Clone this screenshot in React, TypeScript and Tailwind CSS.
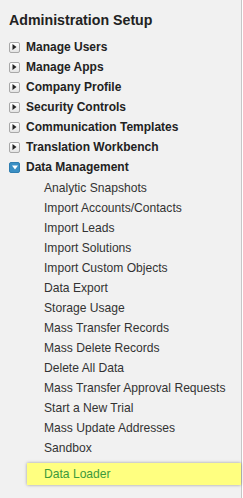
const sections = [
  "Manage Users",
  "Manage Apps",
  "Company Profile",
  "Security Controls",
  "Communication Templates",
  "Translation Workbench",
];

const dataItems = [
  "Analytic Snapshots",
  "Import Accounts/Contacts",
  "Import Leads",
  "Import Solutions",
  "Import Custom Objects",
  "Data Export",
  "Storage Usage",
  "Mass Transfer Records",
  "Mass Delete Records",
  "Delete All Data",
  "Mass Transfer Approval Requests",
  "Start a New Trial",
  "Mass Update Addresses",
  "Sandbox",
];

const Collapsed = () => (
  <span className="w-[11px] h-[11px] mr-[6px] flex items-center justify-center rounded-[2px] border border-[#a8a8a8] bg-gradient-to-b from-white to-[#e4e4e4] shrink-0">
    <svg width="5" height="6" viewBox="0 0 5 6">
      <path d="M0.5 0 L4.5 3 L0.5 6 Z" fill="#222" />
    </svg>
  </span>
);

const Expanded = () => (
  <span className="w-[11px] h-[11px] mr-[6px] flex items-center justify-center rounded-[2px] bg-[#3a8fc4] border border-[#2f7eb1] shrink-0">
    <svg width="6" height="5" viewBox="0 0 6 5">
      <path d="M0 0.5 L6 0.5 L3 4.5 Z" fill="#fff" />
    </svg>
  </span>
);

export default function App() {
  return (
    <div className="w-[243px] h-[498px] bg-white">
      <div
        className="w-[242px] h-[498px] bg-[#f1f1f1] border-r border-[#c6c6c6] text-[#222]"
        style={{ fontFamily: '"Liberation Sans", Arial, sans-serif' }}
      >
        <h2 className="pl-[9px] pt-[11px] mb-[8px] leading-[18px] text-[14.2px] font-bold text-[#222]">
          Administration Setup
        </h2>

        {sections.map((s) => (
          <div key={s} className="h-[20px] flex items-center pl-[9px]">
            <Collapsed />
            <span className="text-[12px] font-bold">{s}</span>
          </div>
        ))}

        <div className="h-[20px] flex items-center pl-[9px]">
          <Expanded />
          <span className="text-[12px] font-bold">Data Management</span>
        </div>

        <ul className="pl-[44px] mt-[1px] text-[12.1px] text-[#333]">
          {dataItems.map((item) => (
            <li key={item} className="h-[20px] leading-[20px]">
              {item}
            </li>
          ))}
        </ul>

        <div className="mt-[5px] ml-[27px] h-[22px] flex items-center pl-[17px] bg-[#ffff80] shadow-[0_0_3px_rgba(0,0,0,0.35)] text-[12.1px] text-[#3c9a3c]">
          Data Loader
        </div>
      </div>
    </div>
  );
}
